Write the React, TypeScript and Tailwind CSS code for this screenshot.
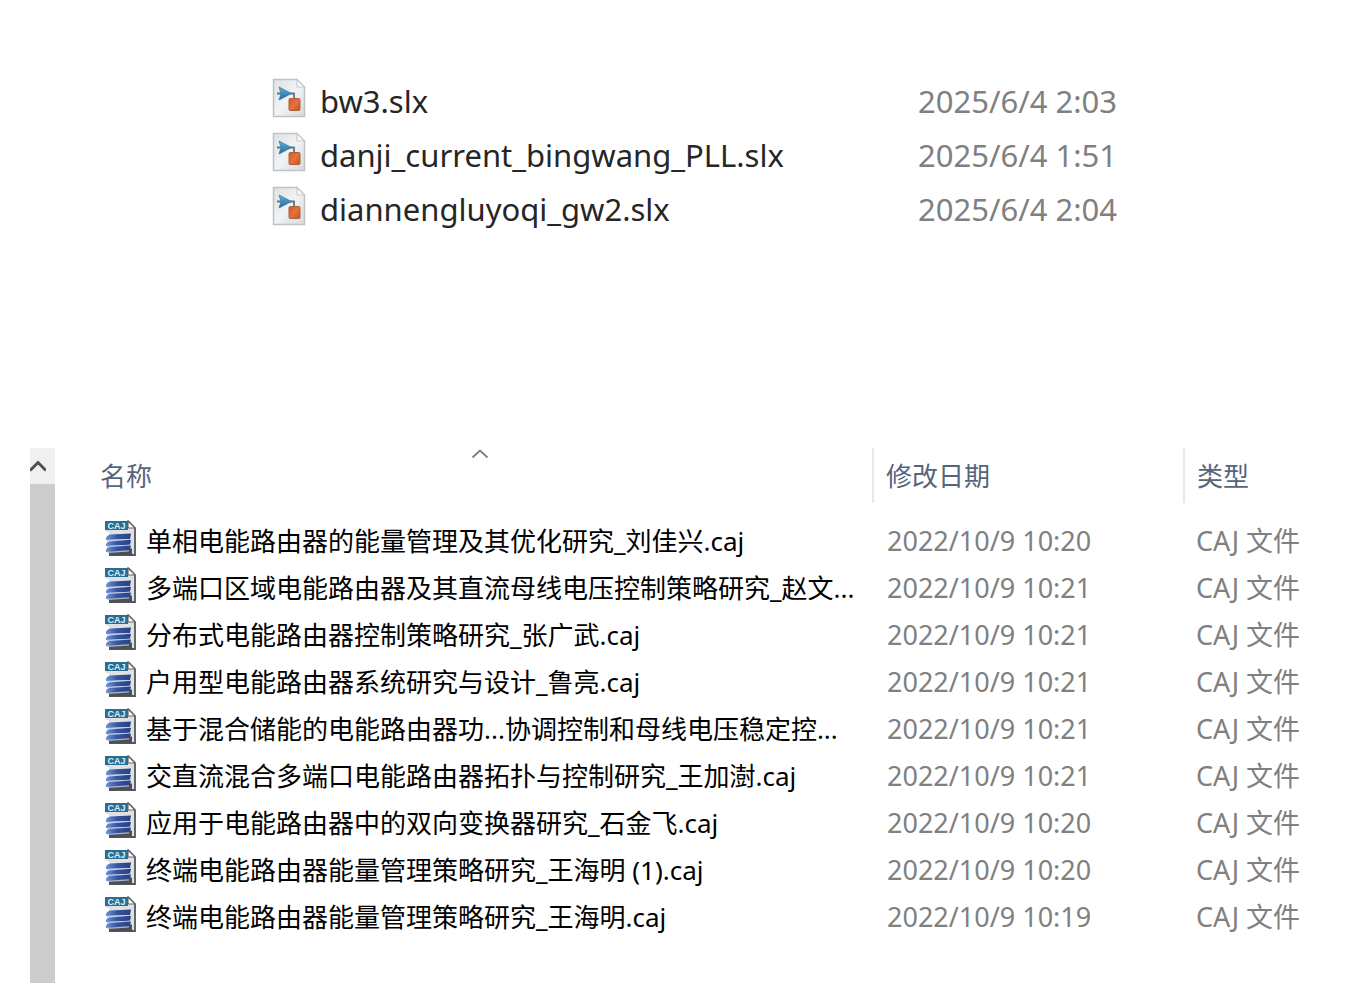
type SlxFile = { name: string; modified: string };
type CajFile = { name: string; modified: string; type: string };

const slxFiles: SlxFile[] = [
  { name: "bw3.slx", modified: "2025/6/4 2:03" },
  { name: "danji_current_bingwang_PLL.slx", modified: "2025/6/4 1:51" },
  { name: "diannengluyoqi_gw2.slx", modified: "2025/6/4 2:04" },
];

const cajFiles: CajFile[] = [
  { name: "单相电能路由器的能量管理及其优化研究_刘佳兴.caj", modified: "2022/10/9 10:20", type: "CAJ 文件" },
  { name: "多端口区域电能路由器及其直流母线电压控制策略研究_赵文...", modified: "2022/10/9 10:21", type: "CAJ 文件" },
  { name: "分布式电能路由器控制策略研究_张广武.caj", modified: "2022/10/9 10:21", type: "CAJ 文件" },
  { name: "户用型电能路由器系统研究与设计_鲁亮.caj", modified: "2022/10/9 10:21", type: "CAJ 文件" },
  { name: "基于混合储能的电能路由器功...协调控制和母线电压稳定控...", modified: "2022/10/9 10:21", type: "CAJ 文件" },
  { name: "交直流混合多端口电能路由器拓扑与控制研究_王加澍.caj", modified: "2022/10/9 10:21", type: "CAJ 文件" },
  { name: "应用于电能路由器中的双向变换器研究_石金飞.caj", modified: "2022/10/9 10:20", type: "CAJ 文件" },
  { name: "终端电能路由器能量管理策略研究_王海明 (1).caj", modified: "2022/10/9 10:20", type: "CAJ 文件" },
  { name: "终端电能路由器能量管理策略研究_王海明.caj", modified: "2022/10/9 10:19", type: "CAJ 文件" },
];

function SlxIcon() {
  return (
    <svg className="h-10 w-[34px] shrink-0" viewBox="0 0 34 40" aria-hidden="true">
      <defs>
        <linearGradient id="slx-page" x1="0" y1="0" x2="1" y2="1">
          <stop offset="0" stopColor="#dde2e6" />
          <stop offset="0.5" stopColor="#f1f3f5" />
          <stop offset="1" stopColor="#d5dade" />
        </linearGradient>
        <linearGradient id="slx-arrow" x1="0" y1="0" x2="0" y2="1">
          <stop offset="0" stopColor="#64b4dc" />
          <stop offset="1" stopColor="#1f6799" />
        </linearGradient>
        <linearGradient id="slx-block" x1="0" y1="0" x2="1" y2="1">
          <stop offset="0" stopColor="#d3592b" />
          <stop offset="0.5" stopColor="#e6713f" />
          <stop offset="1" stopColor="#c9501f" />
        </linearGradient>
      </defs>
      <path d="M1.5 1.5H25L32.5 9V38.5H1.5Z" fill="url(#slx-page)" stroke="#bfc1c4" strokeWidth="1.5" />
      <path d="M25 1.5V9H32.5Z" fill="#fafafa" stroke="#c9cbcd" strokeWidth="1.2" />
      <path d="M5 15.5H9M18 15.5H22V22" fill="none" stroke="#66727b" strokeWidth="1.8" />
      <path d="M7 9L19.5 15.5L7 22L9 15.5Z" fill="url(#slx-arrow)" stroke="#3b7fa8" strokeWidth="0.8" />
      <rect x="17" y="20.5" width="11" height="12" rx="1.2" fill="url(#slx-block)" stroke="#a9603f" strokeWidth="1" />
    </svg>
  );
}

function CajIcon() {
  return (
    <svg className="h-9 w-8 shrink-0" viewBox="0 0 32 36" aria-hidden="true">
      <defs>
        <linearGradient id="caj-book" x1="0" y1="0" x2="1" y2="0">
          <stop offset="0" stopColor="#6d93d8" />
          <stop offset="0.45" stopColor="#35559f" />
          <stop offset="1" stopColor="#2a3f80" />
        </linearGradient>
      </defs>
      <path d="M2 1H24L31 8V35H5V12H2Z" fill="#dfe1e2" />
      <path d="M24 1L31 8V35H5" fill="none" stroke="#53575b" strokeWidth="1.8" />
      <path d="M24 1V8H31Z" fill="#ffffff" stroke="#666a6e" strokeWidth="1.2" />
      <path d="M5 30L28 28.5V35H5Z" fill="#4c5054" />
      <rect x="1" y="1" width="23" height="9" fill="#2a6d94" />
      <text x="12.5" y="8.5" textAnchor="middle" fontFamily="Liberation Sans, sans-serif" fontWeight="700" fontSize="9" fill="#d9edf6">
        CAJ
      </text>
      <path d="M6 14.5L27 13.5L26 19L2 20Q1 16 6 14.5Z" fill="url(#caj-book)" />
      <path d="M3 20L26 19V20.5L3 21.5Z" fill="#c3d3ef" />
      <path d="M5 21.5L27 19.8L26 24.8L2 26Q1 23 5 21.5Z" fill="url(#caj-book)" />
      <path d="M3 26L26 24.8V26L3 27.2Z" fill="#b9c9e8" />
      <path d="M5 27L27 25.5L26 30L2 32Q1 29 5 27Z" fill="url(#caj-book)" />
      <path d="M3 31.8L25 30.2V31.4L4 33Z" fill="#a9b6cf" />
    </svg>
  );
}

function SlxTable() {
  return (
    <table className="w-full table-fixed text-left" aria-label="slx">
      <colgroup>
        <col />
        <col className="w-[436px]" />
      </colgroup>
      <tbody>
        {slxFiles.map((file) => (
          <tr key={file.name} className="h-[54px]">
            <td className="p-0">
              <div className="flex items-start gap-3.5">
                <SlxIcon />
                <span className="text-[31px] leading-[46px] whitespace-nowrap text-[#262626]">{file.name}</span>
              </div>
            </td>
            <td className="p-0 text-[31px] leading-[46px] whitespace-nowrap text-[#808080]">{file.modified}</td>
          </tr>
        ))}
      </tbody>
    </table>
  );
}

function CajTable() {
  return (
    <table className="w-full table-fixed text-left" aria-label="caj">
      <colgroup>
        <col />
        <col className="w-[311px]" />
        <col className="w-[170px]" />
      </colgroup>
      <thead className="text-[26px] leading-8 text-[#56657c]">
        <tr className="h-[55px]">
          <th className="relative p-0 pl-3 font-normal" aria-sort="ascending">
            <svg className="absolute top-0 left-1/2 h-3 w-5 -translate-x-1/2" viewBox="0 0 20 12" aria-hidden="true">
              <path d="M2.5 9.5L10 2.5L17.5 9.5" fill="none" stroke="#808080" strokeWidth="1.8" />
            </svg>
            <button type="button">名称</button>
          </th>
          <th className="border-l-2 border-[#e8e8e8] p-0 pl-3 font-normal">
            <button type="button">修改日期</button>
          </th>
          <th className="border-l-2 border-[#e8e8e8] p-0 pl-3 font-normal">
            <button type="button">类型</button>
          </th>
        </tr>
      </thead>
      <tbody className="before:block before:h-3.5 before:content-['']">
        {cajFiles.map((file) => (
          <tr key={file.name} className="h-[47px]">
            <td className="p-0 pl-4">
              <div className="flex items-start gap-2.5">
                <CajIcon />
                <span className="text-[26px] leading-[42px] whitespace-nowrap text-black">{file.name}</span>
              </div>
            </td>
            <td className="p-0 pl-3.5 text-[27px] leading-[42px] whitespace-nowrap text-[#808080]">{file.modified}</td>
            <td className="p-0 pl-3 text-[27px] leading-[42px] whitespace-nowrap text-[#808080]">{file.type}</td>
          </tr>
        ))}
      </tbody>
    </table>
  );
}

function ScrollRail() {
  return (
    <div className="flex w-[25px] shrink-0 flex-col bg-[#cdcdcd]">
      <button type="button" aria-label="向上滚动" className="flex h-9 items-center bg-[#f0f0f0]">
        <svg className="h-4 w-4" viewBox="0 0 16 16" aria-hidden="true">
          <path d="M0 12.5L8 4.5L16 12.5" fill="none" stroke="#505050" strokeWidth="3" />
        </svg>
      </button>
    </div>
  );
}

export default function App() {
  return (
    <main className="flex min-h-screen flex-col gap-[212px] bg-white pt-[74px] font-['Noto_Sans','Noto_Sans_CJK_SC',sans-serif]">
      <section className="pl-68">
        <SlxTable />
      </section>
      <section className="flex flex-1 pl-[30px]">
        <ScrollRail />
        <div className="min-w-0 flex-1 pl-[33px]">
          <CajTable />
        </div>
      </section>
    </main>
  );
}
